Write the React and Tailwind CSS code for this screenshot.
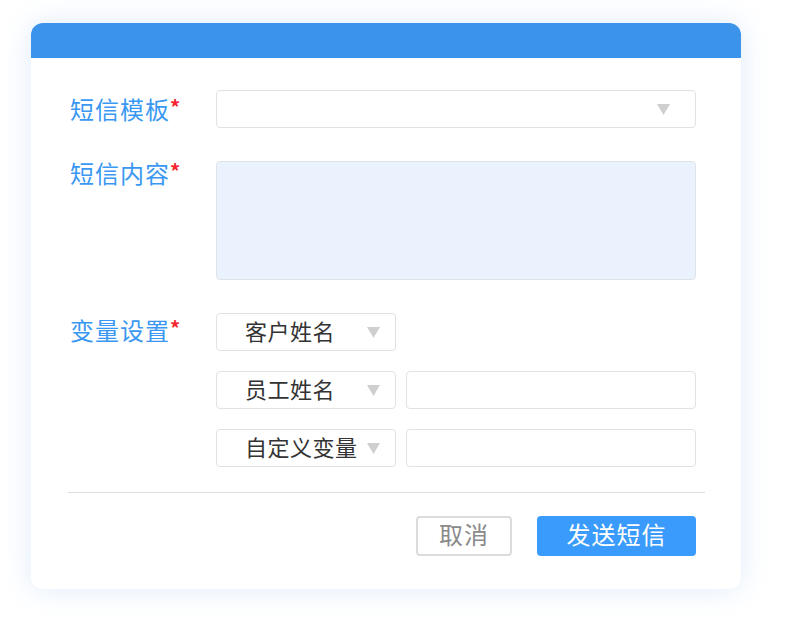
export default function App() {
  const font = { fontFamily: '"Noto Sans CJK SC", "Noto Sans", sans-serif' };
  const Tri = () => (
    <svg width="13" height="11" viewBox="0 0 13 11" className="shrink-0">
      <polygon points="0,0 13,0 6.5,11" fill="#cfcfcf" />
    </svg>
  );
  const Label = ({ children, cls = "" }) => (
    <div className={"w-[146px] shrink-0 flex items-start text-[24px] leading-[38px] text-[#3a98f2] tracking-[1px] " + cls}>
      <span>{children}</span>
      <span className="text-[#f5222d] text-[20px] leading-[34px] font-bold">*</span>
    </div>
  );
  const VarSelect = ({ text }) => (
    <div className="w-[180px] h-[38px] border border-[#e2e2e2] rounded-[4px] flex items-center pl-[28px] pr-[15px] bg-white">
      <span className="flex-1 text-[22px] text-[#333] tracking-[0.5px] leading-none pb-[5px]">{text}</span>
      <Tri />
    </div>
  );
  return (
    <div className="w-[788px] h-[624px] bg-white relative" style={font}>
      <div className="absolute left-[31px] top-[23px] w-[710px] h-[566px] rounded-[12px] bg-white shadow-[0_0_28px_rgba(80,150,240,0.18)] overflow-hidden flex flex-col">
        <div className="h-[35px] bg-[#3c93ea] shrink-0" />
        <div className="flex-1 flex flex-col pt-[32px] pl-[39px] pr-[45px]">
          <div className="flex">
            <Label>短信模板</Label>
            <div className="flex-1 h-[38px] border border-[#e2e2e2] rounded-[4px] flex items-center justify-end pr-[25px]">
              <Tri />
            </div>
          </div>
          <div className="flex mt-[33px]">
            <Label cls="-mt-[7px]">短信内容</Label>
            <div className="flex-1 h-[119px] border border-[#dfe3e8] rounded-[4px] bg-[#eaf3fd]" />
          </div>
          <div className="flex mt-[33px]">
            <Label cls="-mt-[2px]">变量设置</Label>
            <div className="flex-1 flex flex-col gap-[20px]">
              <div className="flex gap-[10px]">
                <VarSelect text="客户姓名" />
              </div>
              <div className="flex gap-[10px]">
                <VarSelect text="员工姓名" />
                <div className="flex-1 h-[38px] border border-[#e2e2e2] rounded-[4px]" />
              </div>
              <div className="flex gap-[10px]">
                <VarSelect text="自定义变量" />
                <div className="flex-1 h-[38px] border border-[#e2e2e2] rounded-[4px]" />
              </div>
            </div>
          </div>
          <div className="h-px bg-[#dddddd] mt-[25px] -ml-[2px] -mr-[9px]" />
          <div className="flex justify-end gap-[25px] mt-[23px]">
            <button className="w-[96px] h-[40px] border-2 border-[#dcdcdc] rounded-[4px] text-[24px] text-[#8a8a8a] leading-none flex items-center justify-center tracking-[1px] pb-[4px]">取消</button>
            <button className="w-[159px] h-[40px] bg-[#3a9bfc] rounded-[4px] text-[24px] text-white leading-none flex items-center justify-center tracking-[1px] pb-[4px]">发送短信</button>
          </div>
        </div>
      </div>
    </div>
  );
}
